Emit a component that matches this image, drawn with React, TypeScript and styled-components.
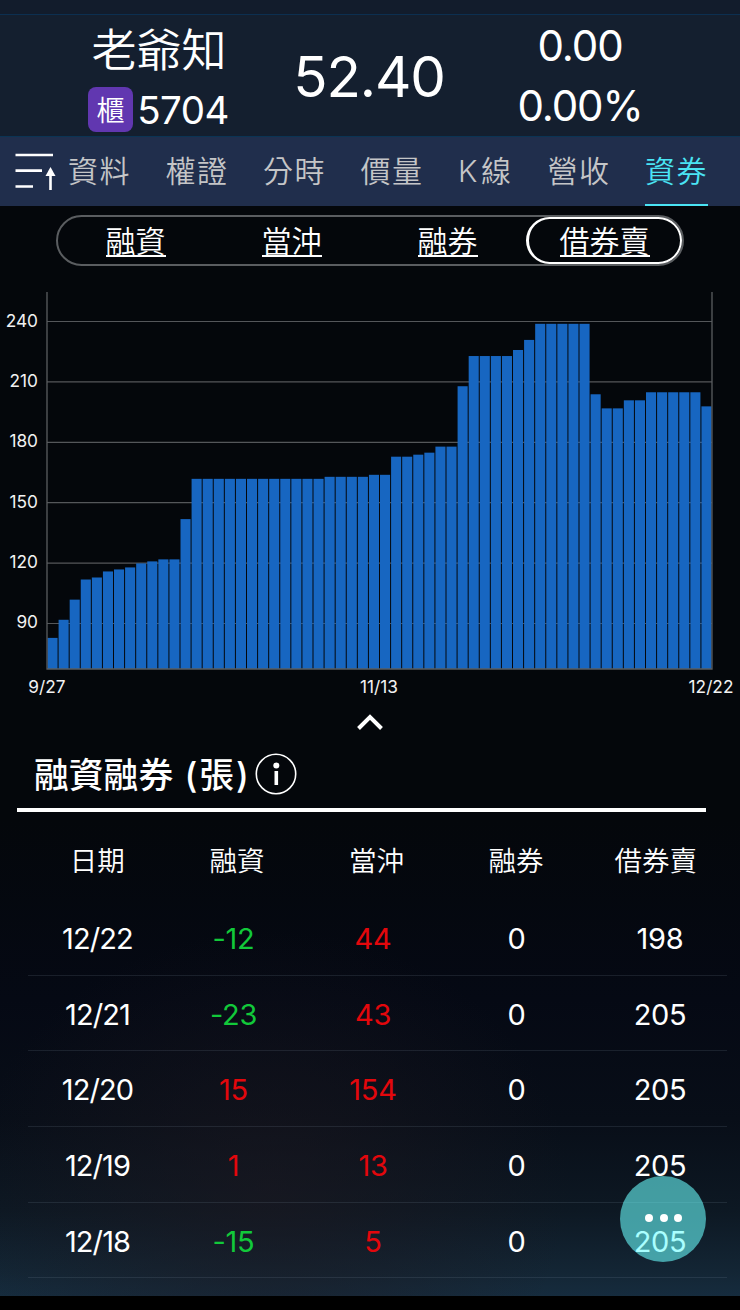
import React from 'react';
import styled, { createGlobalStyle } from 'styled-components';

const GlobalStyle = createGlobalStyle`
  * { box-sizing: border-box; }
  body {
    margin: 0;
    background: #000;
    font-family: Inter, "Noto Sans CJK TC", sans-serif;
    font-weight: 350;
    color: #fff;
  }
`;

const Screen = styled.div`
  width: 740px;
  height: 1310px;
  background: #000;
  overflow: hidden;
`;

const Content = styled.div`
  position: relative;
  height: 1296px;
  background:
    radial-gradient(ellipse 300px 260px at 270px 1190px, rgba(28, 24, 32, 0.6), transparent),
    linear-gradient(#04070b 0, #04070b 820px, #050914 1000px, #080e18 1120px, #0d1823 1210px, #132534 1270px, #162c3e 1297px);
`;

const StatusStrip = styled.div`
  height: 14px;
  background: #121c2c;
`;

const Header = styled.header`
  display: grid;
  grid-template-columns: 317px 104px 318px;
  height: 123px;
  background: #141f2f;
  border-top: 1px solid #0c2f50;
  border-bottom: 1px solid #0b3454;
`;

const Identity = styled.div`
  display: flex;
  flex-direction: column;
  align-items: center;
`;

const StockName = styled.div`
  margin-top: 7px;
  margin-left: 1px;
  font-size: 45px;
  line-height: 58px;
`;

const CodeRow = styled.div`
  display: flex;
  align-items: center;
  gap: 4px;
  margin-top: 7px;
  height: 45px;
  font-size: 38.5px;
  font-weight: 400;
  letter-spacing: -0.5px;
`;

const MarketBadge = styled.span`
  width: 45px;
  height: 45px;
  border-radius: 8px;
  background: #6137b0;
  font-size: 28px;
  font-weight: 350;
  line-height: 48px;
  text-align: center;
  letter-spacing: 0;
`;

const Price = styled.div`
  display: flex;
  align-items: center;
  justify-content: center;
  padding-top: 1px;
  font-size: 56.5px;
  font-weight: 400;
  letter-spacing: -1.1px;
`;

const Change = styled.div`
  display: flex;
  flex-direction: column;
  align-items: center;
  padding-top: 1px;
  font-size: 42px;
  font-weight: 400;
  line-height: 60px;
  letter-spacing: -1.1px;
`;

const TabBar = styled.nav`
  display: flex;
  align-items: stretch;
  height: 69px;
  padding-left: 14px;
  background: #202e4c;
`;

const SortIcon = styled.svg`
  flex: none;
  width: 44px;
  height: 69px;
  margin-right: 10px;
`;

const Tab = styled.span<{ $active?: boolean; $narrow?: boolean }>`
  flex: none;
  width: ${(p) => (p.$narrow ? 55 : 63)}px;
  margin-right: 34.5px;
  border-bottom: 2px solid ${(p) => (p.$active ? '#4ae4f4' : 'transparent')};
  color: ${(p) => (p.$active ? '#4ae4f4' : '#c4c5c7')};
  font-size: 30px;
  line-height: 68px;
  letter-spacing: ${(p) => (p.$narrow ? 3.5 : 1.4)}px;
  white-space: nowrap;

  &:last-child { margin-right: 0; }
`;

const Segments = styled.div`
  display: flex;
  width: 628px;
  height: 51px;
  margin: 9px 0 0 56px;
  border: 2px solid #5a5d60;
  border-radius: 26px;
`;

const Segment = styled.span<{ $active?: boolean }>`
  display: flex;
  flex: none;
  align-items: center;
  justify-content: center;
  width: 25%;
  border: 2px solid ${(p) => (p.$active ? '#fff' : 'transparent')};
  border-left-width: ${(p) => (p.$active ? 3 : 1)}px;
  border-radius: 25px;
  font-size: 30px;
`;

const SegmentLabel = styled.span`
  height: 31px;
  margin-top: 1px;
  border-bottom: 2px solid #fff;
  line-height: 30px;
`;

const Chart = styled.svg`
  display: block;
  width: 740px;
  height: 434px;
`;

const Chevron = styled.svg`
  display: block;
  width: 28px;
  height: 20px;
  margin: 12px auto 0;
`;

const SectionTitle = styled.div`
  display: flex;
  align-items: center;
  width: 689px;
  height: 80px;
  margin-left: 17px;
  padding: 9px 0 0 17px;
  border-bottom: 4px solid #fff;
`;

const TitleText = styled.h2`
  margin: 0;
  font-size: 34.8px;
  line-height: 44px;
  font-weight: 500;
`;

const Unit = styled.span`
  margin-left: 2px;
  letter-spacing: 2px;
`;

const InfoIcon = styled.svg`
  width: 42px;
  height: 42px;
  margin: 0 0 1px 4px;
`;

const TableHead = styled.div`
  display: grid;
  grid-template-columns: repeat(5, 139.6px);
  height: 88px;
  margin-left: 27.5px;
  padding-top: 5px;
  font-size: 27.5px;
  line-height: 88px;
  text-align: center;
`;

const Row = styled.div`
  display: grid;
  grid-template-columns: 139px 133px 146px 141px 146px;
  width: 699px;
  height: 75.7px;
  margin-left: 28px;
  border-bottom: 1px solid rgba(130, 150, 170, 0.16);
  font-size: 29px;
  font-weight: 400;
  line-height: 78px;
  text-align: center;
`;

const Cell = styled.span<{ $tone?: 'up' | 'down'; $date?: boolean }>`
  color: ${(p) => (p.$tone === 'up' ? '#e3070c' : p.$tone === 'down' ? '#12c93a' : '#fff')};
  letter-spacing: ${(p) => (p.$date ? -0.9 : -0.3)}px;
`;

const MoreButton = styled.button`
  position: absolute;
  left: 619.5px;
  top: 1175.5px;
  display: flex;
  align-items: center;
  justify-content: center;
  gap: 6.3px;
  width: 86px;
  height: 86px;
  padding: 0 0 2px 2px;
  border: 0;
  border-radius: 50%;
  background: rgba(106, 255, 255, 0.58);
`;

const Dot = styled.i`
  width: 8px;
  height: 8px;
  border-radius: 50%;
  background: #fff;
`;

const values = [
  83, 92, 102, 112, 113, 116, 117, 118, 120, 121, 122, 122, 142,
  ...Array(12).fill(162), ...Array(4).fill(163), 164, 164, 173, 173, 174, 175, 178, 178, 208,
  ...Array(4).fill(223), 226, 231, ...Array(5).fill(239), 204, 197, 197, 201, 201,
  ...Array(5).fill(205), 198,
];

const CHART_TOP = 266;
const LEFT = 47;
const RIGHT = 712;
const BASE = 669 - CHART_TOP;
const PITCH = (RIGHT - LEFT) / values.length;
const yOf = (v: number) => 321.5 - CHART_TOP + (240 - v) * 2.0133;

function BarChart() {
  return (
    <Chart viewBox="0 0 740 434">
      {[240, 210, 180, 150, 120, 90].map((v) => (
        <g key={v}>
          <line x1={LEFT} x2={RIGHT} y1={yOf(v)} y2={yOf(v)} stroke="#54575a" strokeWidth="1.2" />
          <text x="38" y={yOf(v) + 5} fill="#f2f2f2" fontSize="17.3" fontWeight="400" textAnchor="end">{v}</text>
        </g>
      ))}
      {values.map((v, i) => {
        const x = LEFT + 0.5 + i * PITCH;
        const y = yOf(v) + 0.3;
        return <rect key={i} x={x} y={y} width={PITCH - 1} height={BASE - y} fill="#1766c1" />;
      })}
      <path d={`M47 26V${BASE}H712V26`} fill="none" stroke="#5a5d60" strokeWidth="1.3" />
      <g fill="#f2f2f2" fontSize="17.3" fontWeight="400" textAnchor="middle">
        <text x="47" y="427">9/27</text>
        <text x="379" y="427">11/13</text>
        <text x="711" y="427">12/22</text>
      </g>
    </Chart>
  );
}

const tabs = ['資料', '權證', '分時', '價量', 'K線', '營收', '資券'];

const rows = [
  ['12/22', -12, 44, 0, 198],
  ['12/21', -23, 43, 0, 205],
  ['12/20', 15, 154, 0, 205],
  ['12/19', 1, 13, 0, 205],
  ['12/18', -15, 5, 0, 205],
] as const;

const tone = (n: number) => (n > 0 ? 'up' : n < 0 ? 'down' : undefined);

export default function App() {
  return (
    <Screen>
      <GlobalStyle />
      <Content>
        <StatusStrip />
        <Header>
          <Identity>
            <StockName>老爺知</StockName>
            <CodeRow>
              <MarketBadge>櫃</MarketBadge>
              5704
            </CodeRow>
          </Identity>
          <Price>52.40</Price>
          <Change>
            <span>0.00</span>
            <span>0.00%</span>
          </Change>
        </Header>
        <TabBar>
          <SortIcon viewBox="0 0 44 69" fill="none" stroke="#fff" strokeWidth="2.6">
            <path d="M1.5 18H39M1.5 33.6H28M1.5 49.5H19M36.5 53V36" />
            <path d="M31.5 39L36.5 30L41.5 39Z" fill="#fff" stroke="none" />
          </SortIcon>
          {tabs.map((t) => (
            <Tab key={t} $narrow={t === 'K線'} $active={t === '資券'}>{t}</Tab>
          ))}
        </TabBar>
        <Segments>
          {['融資', '當沖', '融券', '借券賣'].map((s) => (
            <Segment key={s} $active={s === '借券賣'}>
              <SegmentLabel>{s}</SegmentLabel>
            </Segment>
          ))}
        </Segments>
        <BarChart />
        <Chevron viewBox="0 0 28 20" fill="none" stroke="#fff" strokeWidth="4">
          <path d="M2.5 16.5L14 5L25.5 16.5" />
        </Chevron>
        <SectionTitle>
          <TitleText>融資融券 <Unit>(張)</Unit></TitleText>
          <InfoIcon viewBox="0 0 42 42">
            <circle cx="21" cy="21" r="19.7" fill="none" stroke="#fff" strokeWidth="1.6" />
            <circle cx="21.3" cy="12.5" r="3" fill="#fff" />
            <path d="M21.3 18V32" stroke="#fff" strokeWidth="3.6" />
          </InfoIcon>
        </SectionTitle>
        <TableHead>
          {['日期', '融資', '當沖', '融券', '借券賣'].map((h) => <span key={h}>{h}</span>)}
        </TableHead>
        {rows.map(([date, margin, dayTrade, short, lending]) => (
          <Row key={date}>
            <Cell $date>{date}</Cell>
            <Cell $tone={tone(margin)}>{margin}</Cell>
            <Cell $tone={tone(dayTrade)}>{dayTrade}</Cell>
            <Cell>{short}</Cell>
            <Cell>{lending}</Cell>
          </Row>
        ))}
        <MoreButton aria-label="更多">
          <Dot />
          <Dot />
          <Dot />
        </MoreButton>
      </Content>
    </Screen>
  );
}
